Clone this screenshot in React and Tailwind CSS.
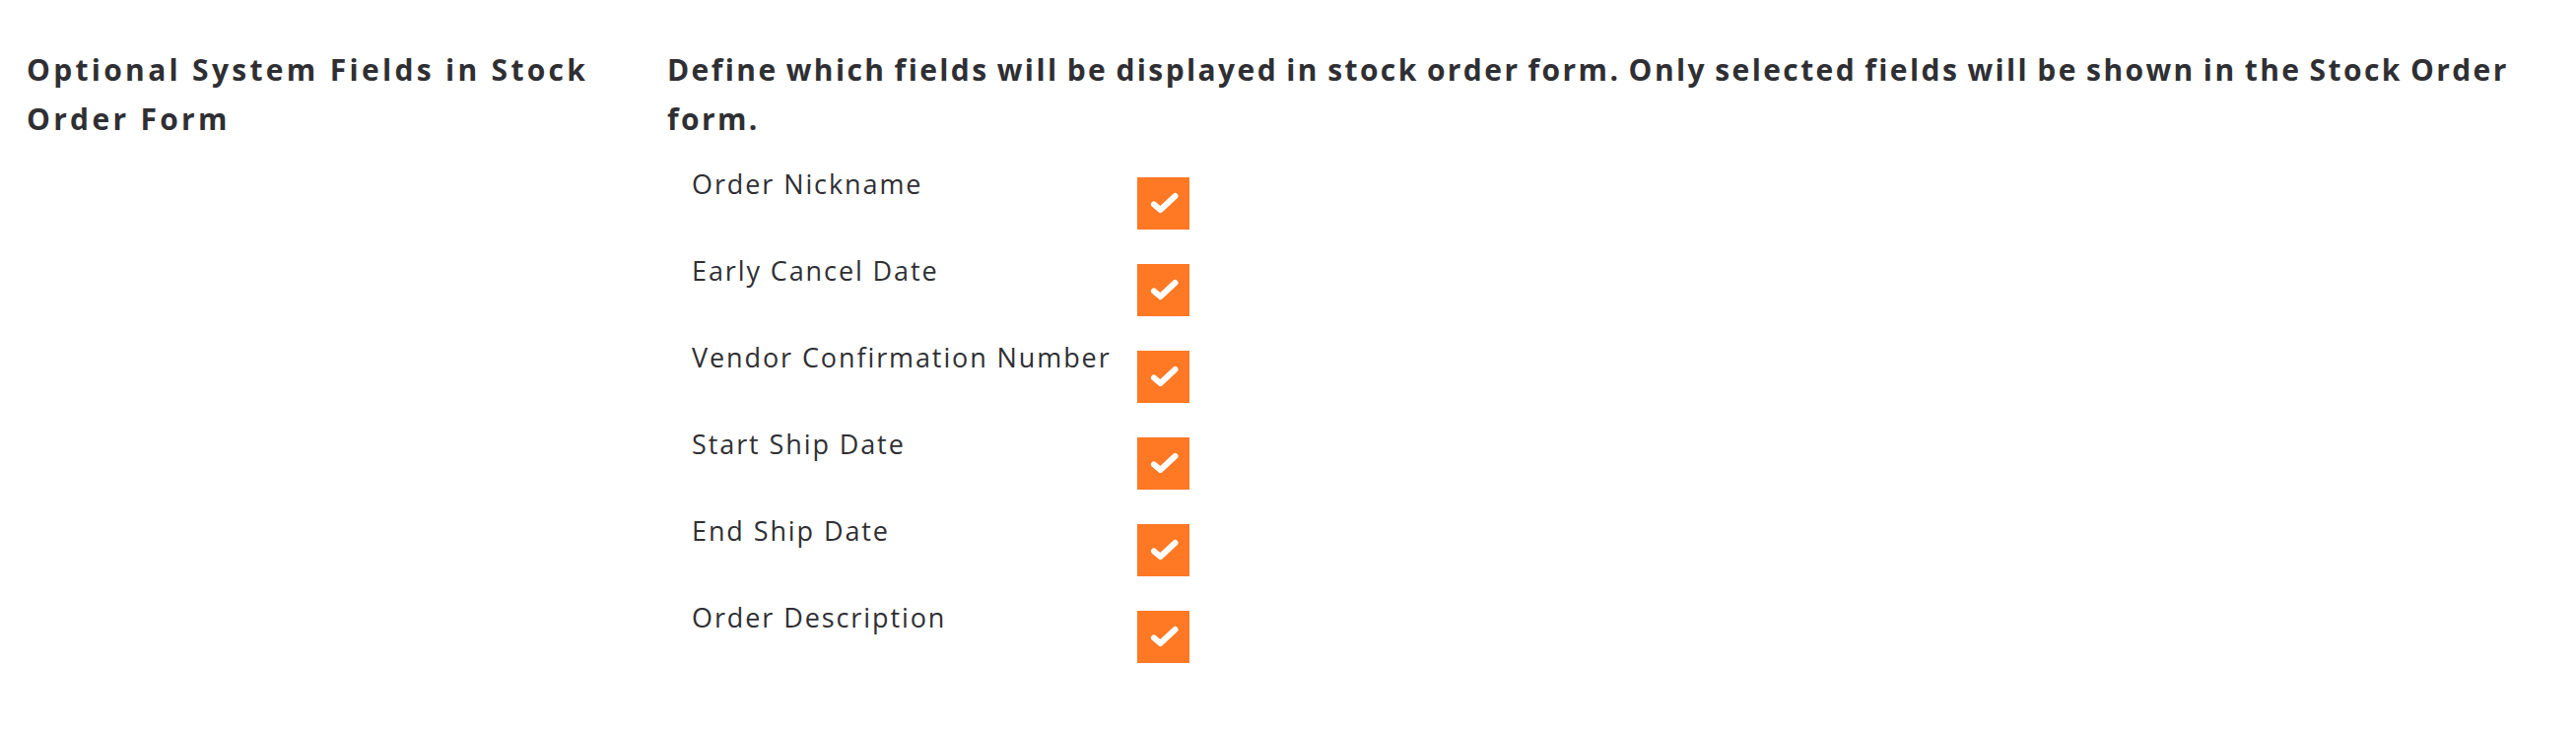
import React from "react";

const fields = [
  "Order Nickname",
  "Early Cancel Date",
  "Vendor Confirmation Number",
  "Start Ship Date",
  "End Ship Date",
  "Order Description",
];

function Check() {
  return (
    <div className="w-[53px] h-[53px] bg-[#ff7823] shrink-0 mt-[8px]">
      <svg width="53" height="53" viewBox="0 0 53 53" fill="none">
        <path d="M17 27.5 L23.5 33 L38.5 19" stroke="white" strokeWidth="6" strokeLinecap="round" strokeLinejoin="round" />
      </svg>
    </div>
  );
}

export default function App() {
  return (
    <div className="bg-white min-h-[740px] text-[#2f2f33]" style={{ fontFamily: "'Open Sans', sans-serif" }}>
      <div className="flex pl-[27px] pt-[46px]">
        <div className="w-[650px] shrink-0 text-[30px] leading-[50px] font-bold tracking-[3.3px]">
          Optional System Fields in Stock
          <br />
          Order Form
        </div>
        <div className="flex-1 min-w-0">
          <div className="text-[30px] leading-[50px] font-bold tracking-[2.4px] [word-spacing:-2px]">
            Define which fields will be displayed in stock order form. Only selected fields will be shown in the Stock Order form.
          </div>
          <div className="flex flex-col gap-[27px] mt-[26px] pl-[25px]">
            {fields.map((f) => (
              <div key={f} className="flex items-start">
                <div className="w-[452px] shrink-0 text-[27px] leading-[30px] tracking-[1.9px]">{f}</div>
                <Check />
              </div>
            ))}
          </div>
        </div>
      </div>
    </div>
  );
}
